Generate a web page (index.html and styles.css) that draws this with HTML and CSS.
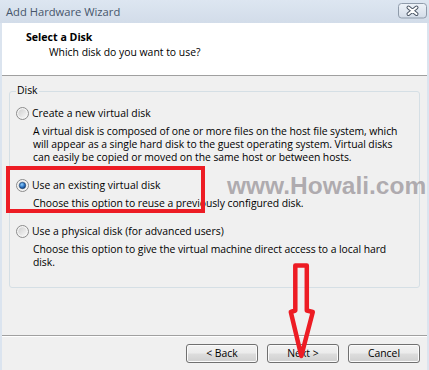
FILE: index.html
```html
<!DOCTYPE html>
<html>
<head>
<meta charset="utf-8">
<link rel="stylesheet" href="styles.css">
</head>
<body>
<div class="window">
  <div class="titlebar">
    <span class="title">Add Hardware Wizard</span>
    <span class="close">
      <svg width="29" height="16" viewBox="0 0 29 16">
        <defs>
          <linearGradient id="cg" x1="0" y1="0" x2="0" y2="1">
            <stop offset="0" stop-color="#eef3f9"/>
            <stop offset="1" stop-color="#d3dce8"/>
          </linearGradient>
        </defs>
        <rect x="0.5" y="0.5" width="28" height="14.5" rx="3" fill="url(#cg)" stroke="#8f9baa"/>
        <path d="M10.5 4.5 L18.5 11 M18.5 4.5 L10.5 11" stroke="#4a5564" stroke-width="4" stroke-linecap="round"/>
        <path d="M10.5 4.5 L18.5 11 M18.5 4.5 L10.5 11" stroke="#ffffff" stroke-width="2" stroke-linecap="round"/>
      </svg>
    </span>
  </div>
  <div class="header">
    <div class="h-title">Select a Disk</div>
    <div class="h-sub">Which disk do you want to use?</div>
  </div>
  <div class="content">
    <fieldset class="group">
      <legend>Disk</legend>
      <div class="option">
        <div class="opt-label">
          <svg class="radio" width="13" height="13" viewBox="0 0 13 13">
            <defs>
              <linearGradient id="rg" x1="0" y1="0" x2="1" y2="1">
                <stop offset="0" stop-color="#cfcfcf"/>
                <stop offset="1" stop-color="#f7f7f7"/>
              </linearGradient>
            </defs>
            <circle cx="6.5" cy="6.5" r="6" fill="#f4f4f4" stroke="#8b8b8b"/>
            <circle cx="6.5" cy="6.5" r="4.3" fill="url(#rg)"/>
          </svg>
          <span>Create a new virtual disk</span>
        </div>
        <div class="opt-desc">A virtual disk is composed of one or more files on the host file system, which<br>will appear as a single hard disk to the guest operating system. Virtual disks<br>can easily be copied or moved on the same host or between hosts.</div>
      </div>
      <div class="option">
        <div class="opt-label">
          <svg class="radio" width="13" height="13" viewBox="0 0 13 13">
            <defs>
              <radialGradient id="dot" cx="0.4" cy="0.35" r="0.7">
                <stop offset="0" stop-color="#8fd0ff"/>
                <stop offset="0.6" stop-color="#2a6fbf"/>
                <stop offset="1" stop-color="#0c3468"/>
              </radialGradient>
            </defs>
            <circle cx="6.5" cy="6.5" r="6" fill="#f4f4f4" stroke="#8b8b8b"/>
            <circle cx="6.5" cy="6.5" r="4.3" fill="url(#rg)"/>
            <circle cx="6.5" cy="6.5" r="3.2" fill="url(#dot)" stroke="#1d3f6a" stroke-width="0.6"/>
          </svg>
          <span>Use an existing virtual disk</span>
        </div>
        <div class="opt-desc">Choose this option to reuse a previously configured disk.</div>
      </div>
      <div class="option">
        <div class="opt-label">
          <svg class="radio" width="13" height="13" viewBox="0 0 13 13">
            <circle cx="6.5" cy="6.5" r="6" fill="#f4f4f4" stroke="#8b8b8b"/>
            <circle cx="6.5" cy="6.5" r="4.3" fill="url(#rg)"/>
          </svg>
          <span>Use a physical disk (for advanced users)</span>
        </div>
        <div class="opt-desc">Choose this option to give the virtual machine direct access to a local hard<br>disk.</div>
      </div>
    </fieldset>
  </div>
  <div class="footer">
    <button class="btn">&lt; Back</button>
    <button class="btn">Next &gt;</button>
    <button class="btn">Cancel</button>
  </div>

  <div class="watermark">www.Howali.com</div>
  <svg class="annot" width="429" height="370" viewBox="0 0 429 370">
    <rect x="8" y="168" width="195" height="43" fill="none" stroke="#ed1c24" stroke-width="4"/>
    <path d="M295.3 265.5 L306.8 265.5 L306.8 310.5 L312.8 312 L301.3 356 L290.8 312 L295.3 310.5 Z" fill="none" stroke="#ed1c24" stroke-width="4.5" stroke-linejoin="round"/>
  </svg>
</div>
</body>
</html>
```

FILE: styles.css
```css
* { box-sizing: border-box; }
html, body {
  margin: 0;
  padding: 0;
  width: 429px;
  height: 370px;
  overflow: hidden;
  background: #f0f0f0;
}
body {
  font-family: "Open Sans", "Noto Sans", sans-serif;
  font-size: 10.4px;
  line-height: 13px;
  color: #000;
}
.window {
  position: relative;
  width: 429px;
  height: 370px;
  display: flex;
  flex-direction: column;
  border-left: 2px solid #dbe4ef;
  border-right: 2px solid #dbe4ef;
  background: #f0f0f0;
}
.titlebar {
  height: 23px;
  flex: none;
  display: flex;
  align-items: flex-start;
  justify-content: space-between;
  background: linear-gradient(#dde6f1, #d2dce9);
  margin: 0 -2px;
  padding: 0 2px 0 6px;
}
.title {
  font-size: 11.2px;
  line-height: 24px;
  color: #46556a;
}
.close {
  display: flex;
  padding-top: 3px;
}
.header {
  height: 53px;
  flex: none;
  background: #fff;
  border-bottom: 1px solid #a0a0a0;
  padding: 8px 0 0 24px;
}
.h-title {
  font-weight: bold;
  font-size: 10.6px;
}
.h-sub {
  margin-top: 2px;
  padding-left: 23px;
}
.content {
  flex: 1;
  padding: 8px 7px 0 7px;
}
.group {
  margin: 0;
  border: 1px solid #d5dfe5;
  border-radius: 3px;
  padding: 8px 6px 18px 6px;
  min-width: 0;
}
.group legend {
  padding: 0 1px 2px 1px;
  margin-left: 0;
  line-height: 13px;
}
.option + .option {
  margin-top: 15px;
}
.opt-label {
  display: flex;
  align-items: center;
  gap: 3px;
  height: 13px;
  white-space: nowrap;
}
.radio {
  flex: none;
  display: block;
}
.opt-desc {
  margin-top: 5px;
  padding-left: 17px;
  white-space: nowrap;
  letter-spacing: -0.06px;
}
.footer {
  height: 35px;
  flex: none;
  border-top: 1px solid #a0a0a0;
  box-shadow: inset 0 1px 0 #ffffff;
  display: flex;
  justify-content: flex-end;
  align-items: flex-start;
  gap: 9px;
  padding: 8px 7px 0 0;
}
.btn {
  width: 72px;
  height: 19px;
  font-family: inherit;
  font-size: 10.4px;
  line-height: 17px;
  padding: 0;
  color: #000;
  border: 1px solid #707070;
  border-radius: 3px;
  background: linear-gradient(#f2f2f2 0%, #ebebeb 48%, #dddddd 52%, #cfcfcf 100%);
  box-shadow: inset 0 0 0 1px #fbfbfb;
}
.watermark {
  position: absolute;
  left: 225px;
  top: 174px;
  font-family: "Liberation Sans", Arial, sans-serif;
  font-weight: bold;
  font-size: 24.5px;
  line-height: 24px;
  color: rgba(150, 144, 150, 0.72);
  white-space: nowrap;
}
.annot {
  position: absolute;
  left: -2px;
  top: 0;
}
```
